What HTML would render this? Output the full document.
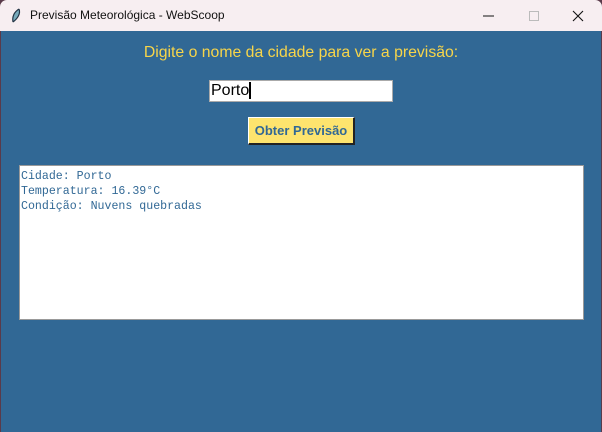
<!DOCTYPE html>
<html><head><meta charset="utf-8"><style>
body{margin:0;width:602px;height:432px;background:#5a3a4a;position:relative;overflow:hidden;font-family:"Liberation Sans",sans-serif}
#title{position:absolute;left:0;top:0;width:602px;height:31px;background:#f7eef1;border-radius:7px 7px 0 0}
#title span{position:absolute;left:30px;top:8px;font-size:12px;color:#111}
#body{position:absolute;left:1px;top:31px;width:600px;height:401px;background:#316895}
.lbl{position:absolute;left:0;width:602px;top:44px;text-align:center;color:#f7d54a;font-size:15.8px}
#entry{position:absolute;left:209px;top:80px;width:184px;height:22px;background:#fff;box-sizing:border-box;border:1px solid #aaa;font-size:16px;line-height:20px;padding-left:1px;color:#000}
#btn{position:absolute;left:248px;top:117px;width:107px;height:28px;box-sizing:border-box;background:#fde46e;border:1px solid #fff;border-right:2px solid #222;border-bottom:2px solid #222;color:#316895;font-weight:bold;font-size:13px;text-align:center;line-height:26px}
#txt{position:absolute;left:19px;top:165px;width:565px;height:155px;box-sizing:border-box;background:#fff;border:1px solid #999;font-family:"Liberation Mono",monospace;font-size:11.6px;line-height:15px;color:#316895;padding:3px 0 0 1px;white-space:pre}
</style></head><body>
<div id="title"><svg style="position:absolute;left:10px;top:8px" width="12" height="16"><path d="M9 1 C4 4 2 9 3 14 M9 1 C11 6 7 11 3 14" stroke="#234" fill="#7ab" stroke-width="1.2"/></svg><span>Previsão Meteorológica - WebScoop</span>
<svg style="position:absolute;left:480px;top:8px" width="110" height="16"><line x1="3" y1="8" x2="14" y2="8" stroke="#111"/><rect x="49.5" y="3.5" width="9" height="9" fill="none" stroke="#bbb"/><path d="M93 3 L103 13 M103 3 L93 13" stroke="#111" stroke-width="1.1"/></svg></div>
<div id="body"></div>
<div class="lbl">Digite o nome da cidade para ver a previsão:</div>
<div id="entry">Porto<span style="border-left:2px solid #000;margin-left:0"></span></div>
<div id="btn">Obter Previsão</div>
<div id="txt">Cidade: Porto
Temperatura: 16.39°C
Condição: Nuvens quebradas</div>
</body></html>
